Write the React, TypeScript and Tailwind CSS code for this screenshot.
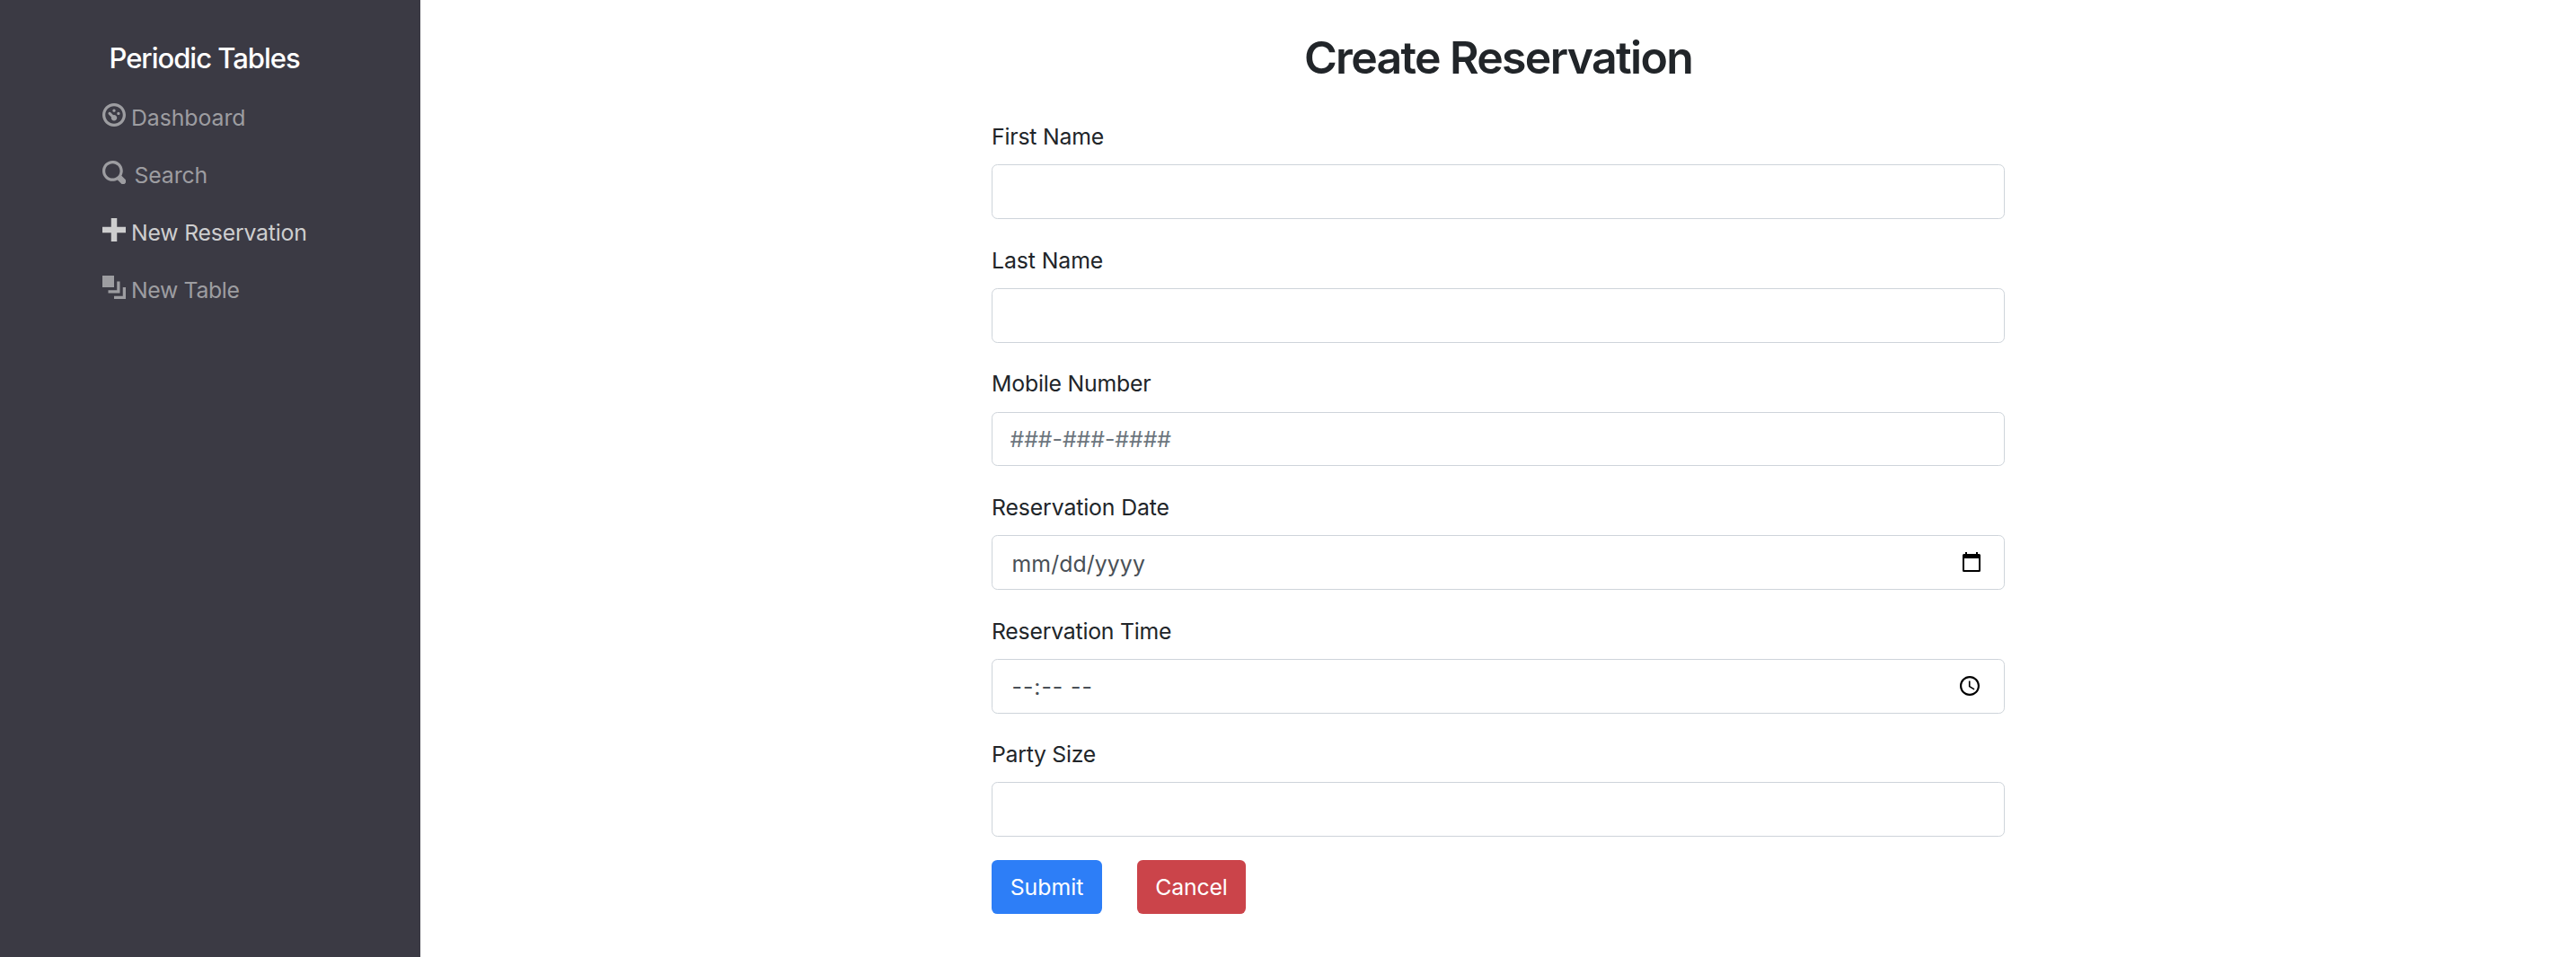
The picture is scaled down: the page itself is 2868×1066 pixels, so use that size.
import React from 'react';

const icons = {
  dashboard: (
    <path d="M4 0c-2.2 0-4 1.8-4 4s1.8 4 4 4 4-1.8 4-4-1.8-4-4-4zm0 1c1.66 0 3 1.34 3 3s-1.34 3-3 3-3-1.34-3-3 1.34-3 3-3zm0 1c-.28 0-.5.22-.5.5s.22.5.5.5.5-.22.5-.5-.22-.5-.5-.5zm-1.66 1a.5.5 0 0 0-.19.84l.91.91c-.02.08-.06.16-.06.25 0 .55.45 1 1 1s1-.45 1-1-.45-1-1-1c-.09 0-.17.04-.25.06l-.91-.91a.5.5 0 0 0-.44-.16.5.5 0 0 0-.06 0zm3.16 0c-.28 0-.5.22-.5.5s.22.5.5.5.5-.22.5-.5-.22-.5-.5-.5z" />
  ),
  search: (
    <path d="M3.5 0c-1.93 0-3.5 1.57-3.5 3.5s1.57 3.5 3.5 3.5c.59 0 1.17-.14 1.66-.41a1 1 0 0 0 .13.13l1 1a1.02 1.02 0 1 0 1.44-1.44l-1-1a1 1 0 0 0-.16-.13c.27-.49.44-1.06.44-1.66 0-1.93-1.55-3.5-3.5-3.5zm0 1c1.39 0 2.5 1.11 2.5 2.5 0 .66-.24 1.27-.66 1.72l-.03.03a1 1 0 0 0-.13.13c-.44.4-1.04.63-1.69.63-1.39 0-2.5-1.11-2.5-2.5s1.11-2.5 2.5-2.5z" />
  ),
  plus: <path d="M3 0v3h-3v2h3v3h2v-3h3v-2h-3v-3h-2z" />,
  layers: <path d="M0 0v4h4v-4h-4zm5 2v3h-3v1h4v-4h-1zm2 2v3h-3v1h4v-4h-1z" />,
};

type NavItem = { icon: keyof typeof icons; label: string; color: string; text: string };

const nav: NavItem[] = [
  { icon: 'dashboard', label: 'Dashboard', color: 'text-[#9d9da1]', text: 'ml-[6px] tracking-[-0.002em]' },
  { icon: 'search', label: 'Search', color: 'text-[#9d9da1]', text: 'ml-[9.5px] tracking-[-0.005em]' },
  { icon: 'plus', label: 'New Reservation', color: 'text-[#cececf]', text: 'ml-[6px] tracking-[-0.008em]' },
  { icon: 'layers', label: 'New Table', color: 'text-[#9d9da1]', text: 'ml-[6px] tracking-[-0.014em]' },
];

function CalendarIcon() {
  return (
    <svg className="mr-[26px] h-[22px] w-[20px] shrink-0 -translate-y-[1px]" viewBox="0 0 20 22" fill="#000">
      <path d="M3 0h2v2h10V0h2v2h1.5A1.5 1.5 0 0 1 20 3.5v17A1.5 1.5 0 0 1 18.5 22h-17A1.5 1.5 0 0 1 0 20.5v-17A1.5 1.5 0 0 1 1.5 2H3zM2 7v13h16V7z" />
    </svg>
  );
}

function ClockIcon() {
  return (
    <svg className="mr-[27px] h-[22px] w-[22px] shrink-0" viewBox="2 2 20 20" fill="#000">
      <path d="M11.99 2C6.47 2 2 6.48 2 12s4.47 10 9.99 10C17.52 22 22 17.52 22 12S17.52 2 11.99 2zM12 20c-4.42 0-8-3.58-8-8s3.58-8 8-8 8 3.58 8 8-3.58 8-8 8zm.5-13H11v6l5.25 3.15.75-1.23-4.5-2.67z" />
    </svg>
  );
}

type FieldProps = {
  label: string;
  labelClass: string;
  placeholder?: string;
  inputClass?: string;
  icon?: React.ReactNode;
};

function Field({ label, labelClass, placeholder, inputClass = '', icon }: FieldProps) {
  return (
    <label className="block">
      <span className={`block h-[36px] leading-[36px] whitespace-nowrap ${labelClass}`}>{label}</span>
      <span className="mt-[13.4px] flex h-[60.8px] items-center rounded-[6.4px] border border-[#ced4da] bg-white">
        <input
          type="text"
          placeholder={placeholder}
          className={`h-full min-w-0 flex-1 bg-transparent outline-none ${inputClass}`}
        />
        {icon}
      </span>
    </label>
  );
}

export default function App() {
  return (
    <div className="flex h-[1066px] w-full bg-white font-['Inter',sans-serif] text-[24.8px] text-[#212529]">
      <aside className="w-[468px] shrink-0 bg-[#3b3a44] pt-[45px]">
        <div className="ml-[121.5px] h-[39px] text-[31px] leading-[40px] font-medium tracking-[-0.033em] whitespace-nowrap text-white">
          Periodic Tables
        </div>
        <nav className="mt-[29px] ml-[114px] flex flex-col gap-[28px]">
          {nav.map((item) => (
            <a key={item.label} className={`flex h-[36px] whitespace-nowrap ${item.color}`}>
              <svg className="mt-[2px] h-[26px] w-[26px] shrink-0" viewBox="0 0 8 8" fill="currentColor">
                {icons[item.icon]}
              </svg>
              <span className={`leading-[36px] ${item.text}`}>{item.label}</span>
            </a>
          ))}
        </nav>
      </aside>
      <main className="flex-1 pl-[636px]">
        <form className="w-[1128px]">
          <h1 className="pt-[34px] text-center text-[50px] leading-[60px] font-semibold tracking-[-0.0335em] whitespace-nowrap">
            Create Reservation
          </h1>
          <div className="mt-[40px] flex flex-col gap-[27.4px]">
            <Field label="First Name" labelClass="tracking-[-0.008em]" />
            <Field label="Last Name" labelClass="tracking-[-0.003em]" />
            <Field
              label="Mobile Number"
              labelClass="tracking-[-0.0075em]"
              placeholder="###-###-####"
              inputClass="pl-[19.5px] tracking-[-0.001em] placeholder:text-[#6c757d]"
            />
            <Field
              label="Reservation Date"
              labelClass="tracking-[-0.005em]"
              placeholder="mm/dd/yyyy"
              inputClass="pt-[2px] pl-[21.5px] tracking-[0.004em] placeholder:text-[#495057]"
              icon={<CalendarIcon />}
            />
            <Field
              label="Reservation Time"
              labelClass="translate-y-px tracking-[-0.009em]"
              placeholder="--:-- --"
              inputClass="pt-[2px] pl-[21.5px] tracking-[0.0395em] placeholder:text-[#495057]"
              icon={<ClockIcon />}
            />
            <Field label="Party Size" labelClass="tracking-[-0.0114em]" />
          </div>
          <div className="mt-[26px] flex gap-[39px] text-white">
            <button type="submit" className="h-[60px] w-[123px] rounded-[6.4px] bg-[#2d7ef7] pt-[2px]">
              Submit
            </button>
            <button
              type="button"
              className="h-[60px] w-[121px] rounded-[6.4px] bg-[#cb444a] pt-[2px] tracking-[-0.0065em]"
            >
              Cancel
            </button>
          </div>
        </form>
      </main>
    </div>
  );
}
